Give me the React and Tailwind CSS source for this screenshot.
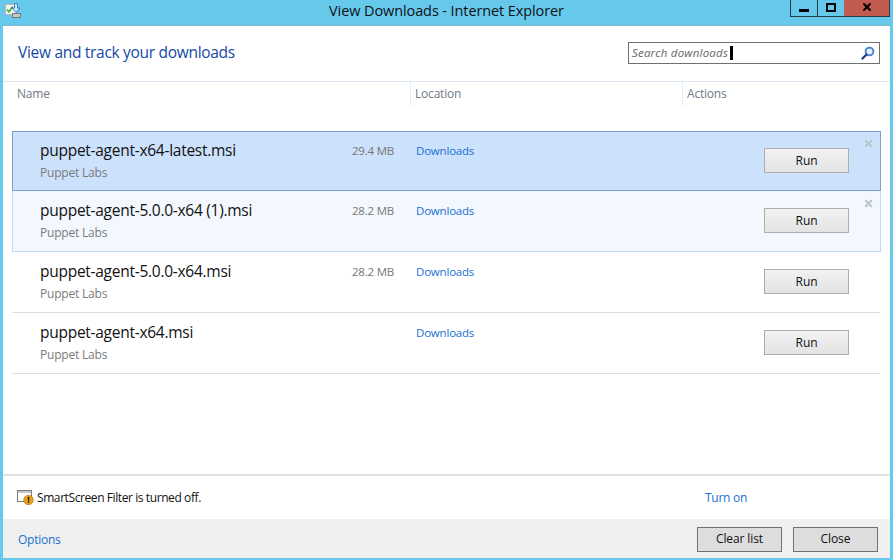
import { X } from 'lucide-react';

const downloads = [
  { name: 'puppet-agent-x64-latest.msi', size: '29.4 MB', state: 'active' },
  { name: 'puppet-agent-5.0.0-x64 (1).msi', size: '28.2 MB', state: 'hover' },
  { name: 'puppet-agent-5.0.0-x64.msi', size: '28.2 MB' },
  { name: 'puppet-agent-x64.msi', size: '' },
];

const rowStyles = {
  active: 'h-[60px] bg-[#cce1fb] border border-[#7da2ce]',
  hover: 'h-[61px] bg-[#f3f8fe] border border-t-transparent border-[#c3d9f5]',
};

function AppIcon() {
  return (
    <svg width="16" height="15" viewBox="0 0 16 15">
      <rect x="0.5" y="1.5" width="11" height="10" fill="#f4f4f4" stroke="#b5b5b5" />
      <path d="M2 6.5l2 2.5 3.5-5.5" fill="none" stroke="#3fae2a" strokeWidth="1.6" />
      <path d="M9.5 0.5h3v4.5h2.5l-4 4.5-4-4.5h2.5z" fill="#cfe6fa" stroke="#2f7fc9" />
      <rect x="7.5" y="10.5" width="8" height="4" fill="#c9c9c9" stroke="#777" />
    </svg>
  );
}

function ShieldIcon() {
  return (
    <svg width="17" height="15" viewBox="0 0 17 15" className="shrink-0">
      <rect x="0.5" y="0.5" width="14" height="11" fill="#fff" stroke="#7d7d7d" />
      <rect x="1" y="1" width="13" height="2" fill="#c8c8c8" />
      <circle cx="11.5" cy="10" r="4.8" fill="#e8a317" stroke="#a86e08" strokeWidth="0.6" />
      <rect x="10.8" y="6.8" width="1.5" height="4" fill="#222" />
      <rect x="10.8" y="11.4" width="1.5" height="1.5" fill="#222" />
    </svg>
  );
}

function SearchIcon() {
  return (
    <svg width="14" height="14" viewBox="0 0 14 14" className="ml-auto">
      <circle cx="8.5" cy="5.5" r="3.9" fill="#e6f1fb" stroke="#3d7fd0" strokeWidth="1.8" />
      <path d="M5.5 8.5L1.5 12.5" stroke="#22438c" strokeWidth="2.4" strokeLinecap="round" />
    </svg>
  );
}

function GrayButton({ children, className }) {
  return (
    <button className={`flex items-center justify-center text-[12px] text-[#111] tracking-[-0.1px] ${className}`}>
      {children}
    </button>
  );
}

function DownloadRow({ item }) {
  const style = rowStyles[item.state] || 'h-[61px] border border-transparent border-b-[#dcdcdc]';
  return (
    <div className={`relative flex pl-[27px] ${style}`}>
      <div className="w-[289px] pt-[7px]">
        <div className="text-[15.5px] leading-[22px] text-[#111] tracking-[-0.27px]">{item.name}</div>
        <div className="mt-[3px] text-[12px] leading-[18px] text-[#7b7b7b] tracking-[-0.2px]">Puppet Labs</div>
      </div>
      <div className="w-[65px] pt-[11px] text-right text-[11.5px] leading-[16px] text-[#777] tracking-[-0.2px]">{item.size}</div>
      <div className="ml-[22px] w-[348px] pt-[11px] text-[11.5px] leading-[16px] text-[#1a6fd4] tracking-[-0.2px]">Downloads</div>
      <div className="pt-[16px]">
        <GrayButton className="w-[85px] h-[25px] bg-gradient-to-b from-[#f2f2f2] to-[#e3e3e3] border border-[#adadad]">Run</GrayButton>
      </div>
      {item.state && (
        <X size={11} strokeWidth={4} className="absolute right-[6px] top-[6px] text-[#bcc4cc]" />
      )}
    </div>
  );
}

export default function App() {
  return (
    <div className="w-[893px] h-[560px] flex flex-col overflow-hidden bg-[#66c9ec] font-['Open_Sans','Noto_Sans',sans-serif]">
      <div className="h-[25px] shrink-0 grid grid-cols-[1fr_auto_1fr]">
        <div className="pl-[5px] pt-[3px]"><AppIcon /></div>
        <div className="pt-[1px] text-[14.5px] leading-[20px] text-[#111] tracking-[-0.1px]">View Downloads - Internet Explorer</div>
        <div className="flex justify-end items-start pr-[3px]">
          <div className="flex h-[17px] border-x border-b border-[#2b3a42]">
            <div className="w-[27px] flex items-center justify-center border-r border-[#2b3a42]">
              <div className="w-[10px] h-[3px] mt-[5px] bg-black" />
            </div>
            <div className="w-[26px] flex items-center justify-center">
              <div className="w-[10px] h-[9px] -mt-[2px] border-2 border-black" />
            </div>
            <div className="w-[45px] flex items-center justify-center bg-[#c25b50]">
              <X size={12} strokeWidth={4} className="text-black -mt-[2px]" />
            </div>
          </div>
        </div>
      </div>

      <div className="ml-[3px] mr-[3px] mb-[2px] flex-1 flex flex-col bg-white border-t border-[#7fb4c9]">
        <div className="h-[55px] shrink-0 flex items-start justify-between pl-[15px] pr-[10px]">
          <div className="pt-[14px] text-[15.5px] leading-[24px] text-[#1549a8] tracking-[-0.3px]">View and track your downloads</div>
          <div className="mt-[16px] w-[252px] h-[22px] flex items-center border border-[#6f6f6f] pl-[3px] pr-[4px]">
            <span className="text-[11.5px] italic text-[#666] tracking-[0.2px]">Search downloads</span>
            <span className="ml-[2px] w-[3px] h-[14px] bg-black" />
            <SearchIcon />
          </div>
        </div>

        <div className="h-[25px] shrink-0 flex border-t border-[#dbe7f2] text-[12px] leading-[24px] text-[#6f7a86] tracking-[-0.2px]">
          <div className="w-[407px] pl-[14px]">Name</div>
          <div className="w-[272px] pl-[4px] border-l border-[#e4edf5]">Location</div>
          <div className="pl-[4px] border-l border-[#e4edf5]">Actions</div>
        </div>

        <div className="mt-[25px] ml-[9px] mr-[9px] flex flex-col">
          {downloads.map((item) => (
            <DownloadRow key={item.name} item={item} />
          ))}
        </div>

        <div className="mt-auto h-[45px] shrink-0 flex items-center border-t-2 border-[#e2e2e2] pl-[14px]">
          <ShieldIcon />
          <span className="ml-[3px] w-[668px] text-[12px] text-[#111] tracking-[-0.41px]">SmartScreen Filter is turned off.</span>
          <span className="text-[12px] text-[#1a6fd4] tracking-[-0.25px]">Turn on</span>
        </div>

        <div className="h-[39px] shrink-0 flex items-center bg-[#efefef] pl-[15px] pr-[12px]">
          <span className="pt-[2px] text-[12px] text-[#1a6fd4] tracking-[-0.25px]">Options</span>
          <div className="ml-auto mt-[1px] flex gap-[11px]">
            <GrayButton className="w-[85px] h-[25px] bg-[#dddddd] border border-[#707070]">Clear list</GrayButton>
            <GrayButton className="w-[85px] h-[25px] bg-[#dddddd] border border-[#707070]">Close</GrayButton>
          </div>
        </div>
      </div>
    </div>
  );
}
